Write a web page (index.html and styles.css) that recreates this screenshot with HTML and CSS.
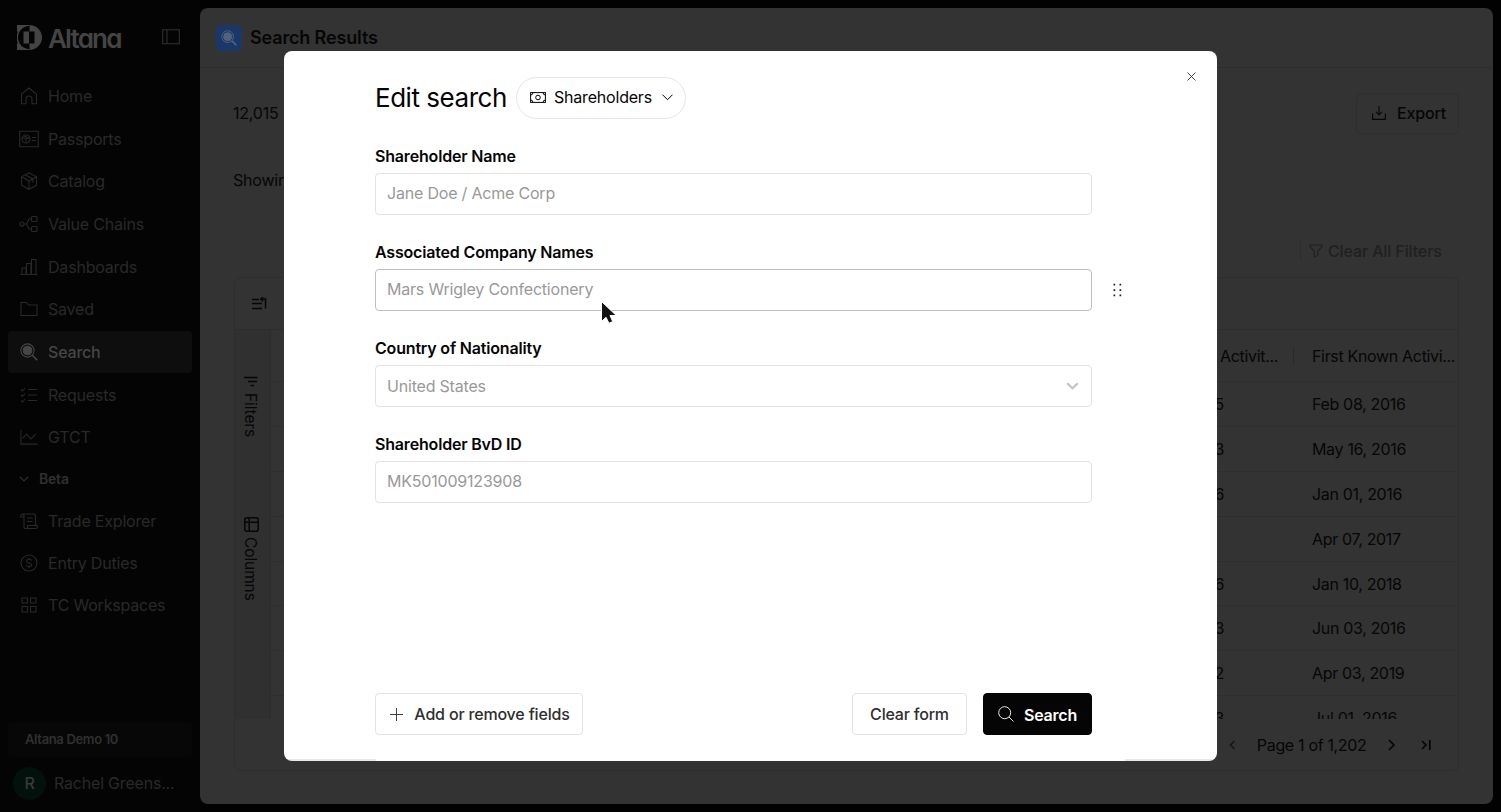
FILE: index.html
```html
<!DOCTYPE html>
<html lang="en">
<head>
<meta charset="utf-8">
<title>Altana - Search Results</title>
<link rel="stylesheet" href="styles.css">
</head>
<body>
<div class="app">
  <aside class="sidebar">
    <div class="brand">
      <svg class="brand-mark" width="25" height="25" viewBox="0 0 25 25"><path fill="currentColor" fill-rule="evenodd" d="M0 0H12V1A11.500 11.500 0 0 0 1 12.500 11.500 11.500 0 0 0 12 24V25H0V19L.8 18A13 13 0 0 1 .8 7L0 6ZM12.500 0A12.500 12.500 0 0 1 12.500 25V18.500H17.500V6.500H12.500ZM6.500 6.500h5.500v12H6.500Z"/></svg>
      <span class="brand-name">Altana</span>
      <svg class="panel-icon" width="18" height="16" viewBox="0 0 18 16"><path d="M.7.7H17.3V14.8H.7ZM5 .7V14.8"/></svg>
    </div>
    <nav class="nav">
      <a class="nav-item"><svg viewBox="0 0 18 18"><path d="M1.5 7.2 9 1l7.500 6.200V16.800H12V12a3 3 0 0 0-6 0v4.800H1.500Z"/></svg>Home</a>
      <a class="nav-item"><svg class="wide" viewBox="0 0 20 18"><path d="M.7 1.200H19.300V16.800H.7ZM13 7.500h4M13 10.500h4"/><circle cx="7" cy="9" r="4"/><path d="M3.500 7.500 7 9l3.500-1.500M7 9v4M5 6l4 2"/></svg>Passports</a>
      <a class="nav-item"><svg viewBox="0 0 18 18"><path d="M9 .8 16.500 4.800V13.200L9 17.300 1.500 13.200V4.800ZM1.500 4.800 9 9l7.500-4.200M9 9v8.300M5.200 2.800l7.600 4.200v3.500"/></svg>Catalog</a>
      <a class="nav-item"><svg class="wide" viewBox="0 0 20 18"><circle cx="3" cy="9" r="2"/><rect x="12.500" y="1.500" width="5.500" height="5" rx="1"/><rect x="12.500" y="11.500" width="5.500" height="5" rx="1"/><path d="M5 9h2.500L10 4h2.500M7.500 9 10 14h2.500"/></svg>Value Chains</a>
      <a class="nav-item"><svg viewBox="0 0 18 18"><path d="M.5 16.500h17M2 16.500V10H6v6.500M6.500 16.500V5.500h4.500v11M11.500 16.500V1.500H16v15"/></svg>Dashboards</a>
      <a class="nav-item"><svg viewBox="0 0 18 18"><path d="M1 15.500V2.500H6.500L8.500 5H17V15.500Z"/></svg>Saved</a>
      <a class="nav-item active"><svg viewBox="0 0 18 18"><circle cx="7.500" cy="7.500" r="6.600"/><circle cx="7.500" cy="7.500" r="4.300" fill="currentColor"/><path d="m12.300 12.300 5 5" stroke-width="1.600"/></svg>Search</a>
      <a class="nav-item"><svg viewBox="0 0 18 18"><path d="m1 3.500 1.500 1.500L5 2M1 9l1.500 1.500L5 7.500M1 14.500 2.500 16 5 13M8 3.500h9M8 9h9M8 14.500h9"/></svg>Requests</a>
      <a class="nav-item"><svg viewBox="0 0 19 18"><path d="M1 1.500V16.500H18.500M2.500 10.500 7 6l4.500 5 5-5"/></svg>GTCT</a>
    </nav>
    <div class="nav nav-beta">
      <div class="nav-group"><svg width="10" height="6" viewBox="0 0 10 6"><path d="m.7.7 4.300 4.300L9.300.7"/></svg>Beta</div>
      <a class="nav-item"><svg viewBox="0 0 18 18"><path d="M4 12.500V3.500A1.700 1.700 0 0 0 .7 3.500V5H4M2.500 2H14A1.500 1.500 0 0 1 15.500 3.500V13M4 12.500V15A1.500 1.500 0 0 0 5.500 16.500H16A1.500 1.500 0 0 0 17.300 15V13.500H7.500V15A1.500 1.500 0 0 1 5.500 16.500M7 6h5.500M7 9.500h5.500"/></svg>Trade Explorer</a>
      <a class="nav-item"><svg viewBox="0 0 18 18"><circle cx="9" cy="9" r="8"/><path d="M11.700 6.500C11.200 5.300 6.500 4.800 6.500 7.200S11.700 8.500 11.700 11 6.700 12.800 6.200 11.300M9 4v1.500M9 12.500V14"/></svg>Entry Duties</a>
      <a class="nav-item"><svg viewBox="0 0 18 18"><path d="M2 2H7.500V7H2ZM10.500 2H16V7H10.500ZM2 10.500H7.500V16H2ZM10.500 10.500H16V16H10.500Z"/></svg>TC Workspaces</a>
    </div>
    <div class="account">
      <div class="workspace">Altana Demo 10</div>
      <div class="user"><span class="avatar">R</span><span>Rachel Greens...</span></div>
    </div>
  </aside>

  <main class="main">
    <header class="page-head">
      <span class="page-icon"><svg width="16" height="16" viewBox="0 0 18 18"><circle cx="7.500" cy="7.500" r="6.600"/><circle cx="7.500" cy="7.500" r="4.500" fill="currentColor"/><path d="m12.300 12.300 5 5" stroke-width="1.800"/></svg></span>
      <h1>Search Results</h1>
    </header>
    <div class="summary">
      <span>12,015</span>
      <button class="export"><svg width="14" height="14" viewBox="0 0 14 14"><path d="M.6 7.500v5.900h12.800V7.500M7 0v8.500M4 5.800l3 3 3-3"/></svg>Export</button>
    </div>
    <div class="showing">Showing</div>
    <div class="filter-bar"><span class="clear-filters"><svg width="14" height="14" viewBox="0 0 14 14"><path d="M1 1H13V2.500L8.800 7V11.500L5.200 13V7L1 2.500Z"/></svg>Clear All Filters</span></div>
    <section class="grid">
      <div class="grid-tools"><svg width="16" height="14" viewBox="0 0 16 14"><path d="M0 2.500H7M0 6.500H10M0 11.500H10M8.500 2H13.500V11.500M11 0 8.800 2 11 4.200"/></svg></div>
      <div class="grid-body">
        <div class="rail">
          <div class="rail-tab rail-filters"><svg width="14" height="12" viewBox="0 0 14 12"><path d="M0 1.500H13.500M4 5.500H13M6.500 9.500H10"/></svg><span>Filters</span></div>
          <div class="rail-tab rail-columns"><svg width="15" height="15" viewBox="0 0 15 15"><rect x=".8" y=".8" width="13.400" height="13.400" rx="2"/><path d="M1 5.200H14M5.200 1V14"/></svg><span>Columns</span></div>
        </div>
        <div class="rows">
          <div class="row row-head"><span class="last">Activit...</span><span class="first">First Known Activi...</span></div>
          <div class="row"><span class="last">5</span><span class="first">Feb 08, 2016</span></div>
          <div class="row"><span class="last">3</span><span class="first">May 16, 2016</span></div>
          <div class="row"><span class="last">6</span><span class="first">Jan 01, 2016</span></div>
          <div class="row"><span class="last"></span><span class="first">Apr 07, 2017</span></div>
          <div class="row"><span class="last">6</span><span class="first">Jan 10, 2018</span></div>
          <div class="row"><span class="last">3</span><span class="first">Jun 03, 2016</span></div>
          <div class="row"><span class="last">2</span><span class="first">Apr 03, 2019</span></div>
          <div class="row"><span class="last">3</span><span class="first">Jul 01, 2016</span></div>
        </div>
      </div>
      <div class="pager">
        <svg class="dim" width="7" height="10" viewBox="0 0 7 10"><path d="M5.500 1 1.500 5l4 4"/></svg>
        <span>Page 1 of 1,202</span>
        <svg class="next" width="7" height="12" viewBox="0 0 7 12"><path d="m1 1 5 5-5 5"/></svg>
        <svg width="10" height="10" viewBox="0 0 10 10"><path d="m1 1 4 4-4 4M8.800 0V10"/></svg>
      </div>
    </section>
  </main>
</div>

<div class="modal" role="dialog">
  <svg class="close" width="9" height="9" viewBox="0 0 9 9"><path d="m.5.5 8 8m0-8-8 8"/></svg>
  <div class="modal-head">
    <h2>Edit search</h2>
    <button class="pill">
      <svg width="16" height="11" viewBox="0 0 16 11"><rect x=".6" y=".6" width="14.800" height="9.800"/><circle cx="8" cy="5.500" r="2.300"/><path d="M.6 3A2.500 2.500 0 0 0 3 .6M13 .6A2.500 2.500 0 0 0 15.400 3M15.400 8A2.500 2.500 0 0 0 13 10.400M3 10.400A2.500 2.500 0 0 0 .6 8"/></svg>
      <span>Shareholders</span>
      <svg width="11" height="7" viewBox="0 0 11 7"><path d="m.5.7 5 5 5-5"/></svg>
    </button>
  </div>
  <div class="fields">
    <div class="field"><label>Shareholder Name</label><div class="input">Jane Doe / Acme Corp</div></div>
    <div class="field"><label>Associated Company Names</label><div class="input hover">Mars Wrigley Confectionery
      <svg class="drag" width="9" height="14" viewBox="0 0 9 14"><path d="M.5 .8h1.700v1.700H.5ZM6.500 .8h1.700v1.700H6.500ZM.5 6.200h1.700v1.700H.5ZM6.500 6.200h1.700v1.700H6.500ZM.5 11.600h1.700v1.700H.5ZM6.500 11.600h1.700v1.700H6.500Z"/></svg></div></div>
    <div class="field"><label>Country of Nationality</label><div class="input select">United States<svg width="13" height="8" viewBox="0 0 13 8"><path d="m1.200 1.200 5.300 5.100 5.300-5.100"/></svg></div></div>
    <div class="field"><label>Shareholder BvD ID</label><div class="input">MK501009123908</div></div>
  </div>
  <div class="modal-foot">
    <button class="btn add"><svg width="13" height="13" viewBox="0 0 13 13"><path d="M6.500 0v13M0 6.500h13"/></svg>Add or remove fields</button>
    <button class="btn clear">Clear form</button>
    <button class="btn primary"><svg width="16" height="16" viewBox="0 0 16 16"><circle cx="6.700" cy="6.700" r="6"/><path d="m11 11 4.500 4.500"/></svg><span>Search</span></button>
  </div>
</div>
<svg class="cursor" width="18" height="25" viewBox="0 0 18 25"><path d="M1.500 1.500V21.500L6 17.300 9 23.300 12.700 21.500 10 15.500H16.300Z"/></svg>
</body>
</html>
```

FILE: styles.css
```css
* { box-sizing: border-box; }
body {
  margin: 0;
  width: 1501px;
  height: 812px;
  overflow: hidden;
  background: #020202;
  color: #060606;
  font: 400 16px/20px Inter, "Liberation Sans", sans-serif;
  letter-spacing: -.2px;
}
svg { fill: none; stroke: currentColor; stroke-width: 1.1; flex: none; display: block; }
button { font: inherit; letter-spacing: inherit; color: inherit; background: none; margin: 0; padding: 0; }
h1, h2 { margin: 0; }

.app { display: flex; height: 812px; }

/* Sidebar */
.sidebar { width: 200px; padding: 0 8px; background: #040404; color: #292929; display: flex; flex-direction: column; }
.brand { height: 74.500px; display: flex; align-items: center; padding: 0 12px 0 9px; color: #444; }
.brand-mark { stroke: none; }
.brand-name { margin: 3px 0 0 6px; font-size: 26px; line-height: 30px; font-weight: 600; letter-spacing: -1.800px; font-feature-settings: "cv11"; }
.panel-icon { margin-left: auto; color: #303030; }
.nav-item { height: 42.700px; display: flex; align-items: center; gap: 10px; padding-left: 12px; border-radius: 4px; }
.nav-item svg { width: 18px; height: 18px; }
.nav-item svg.wide { width: 20px; margin: 0 -1px; }
.nav-item.active { background: linear-gradient(#0e0e0e, #0e0e0e) 0 0 / 100% 42px no-repeat; color: #464646; font-weight: 500; }
.nav-group { height: 41.500px; display: flex; align-items: center; gap: 10px; padding-left: 11px; font-size: 14px; font-weight: 600; color: #303030; }
.nav-beta .nav-item { height: 41.750px; }
.account { margin-top: auto; padding-bottom: 12px; }
.workspace { height: 35px; padding: 0 17px; background: #070707; border-radius: 3px; font-size: 13px; line-height: 35px; font-weight: 600; letter-spacing: -.35px; color: #303030; }
.user { display: flex; align-items: center; gap: 8px; height: 34px; margin-top: 9px; padding-left: 5px; }
.avatar { width: 33px; height: 33px; border-radius: 50%; background: #03110c; color: #363c3a; font-weight: 500; line-height: 33px; text-align: center; }

/* Results page */
.main { width: 1293px; height: 796px; margin-top: 8px; background: #333; border-radius: 8px; display: flex; flex-direction: column; }
.page-head { height: 60px; padding: 0 16px; border-bottom: 1px solid #2e2e2e; display: flex; align-items: center; gap: 8px; }
.page-icon { width: 26px; height: 26px; border-radius: 5px; background: #193769; color: #54627a; display: grid; place-items: center; }
h1 { font-size: 18px; line-height: 24px; font-weight: 600; letter-spacing: -.15px; }
.summary { display: flex; align-items: center; justify-content: space-between; height: 41px; margin: 24.500px 34px 0 33px; }
.export { width: 103px; height: 41px; border: 1px solid #2e2e2e; border-radius: 4px; display: flex; align-items: center; justify-content: center; gap: 11px; padding-left: 3px; font-weight: 500; }
.showing { margin: 36.500px 33px 0; }
.filter-bar { height: 41px; margin: 40px 34px 0; display: flex; align-items: center; justify-content: flex-end; color: #202020; }
.clear-filters { display: flex; align-items: center; gap: 5px; width: 159px; height: 20px; padding-left: 8px; border-left: 1px solid #2d2d2d; font-weight: 500; letter-spacing: -.12px; }
.grid { height: 494px; margin: 6px 34px 0; border: 1px solid #2d2d2d; border-radius: 6px; }
.grid-tools { height: 52px; padding: 19px 17px; border-bottom: 1px solid #2d2d2d; }
.grid-tools svg { stroke-width: 1.500; }
.grid-body { height: 389px; display: flex; overflow: hidden; }
.rail { width: 36px; border-right: 1px solid #2d2d2d; background: #303030; }
.rail-tab { display: flex; flex-direction: column; align-items: center; gap: 5px; padding-right: 3px; }
.rail-tab span { writing-mode: vertical-rl; line-height: 18px; font-size: 15.500px; letter-spacing: -.1px; margin-right: 2px; }
.rail-tab svg { stroke-width: 1.500; }
.rail-filters { padding-top: 46px; }
.rail-columns { padding-top: 80px; }
.rows { flex: 1; }
.row { height: 44.900px; border-bottom: 1px solid #2e2e2e; display: flex; align-items: center; justify-content: flex-end; line-height: 20px; letter-spacing: -.33px; white-space: nowrap; }
.row-head { height: 52px; }
.last { width: 70px; margin-right: 88px; text-align: right; }
.row-head .last { width: 94px; height: 18px; line-height: 18px; padding-right: 15px; border-right: 1px solid #2a2a2a; margin-right: 18px; }
.first { width: 146px; }
.pager { height: 51px; display: flex; align-items: center; justify-content: flex-end; padding-right: 27.500px; }
.pager svg { stroke-width: 1.700; }
.pager span { margin: 0 21px; letter-spacing: -.33px; }
.pager .dim { color: #181818; }
.pager .next { margin-right: 26px; }

/* Edit search dialog */
.modal {
  position: absolute;
  left: 284px;
  top: 51px;
  width: 933px;
  height: 710px;
  padding: 25.500px 125px 26px 91px;
  border-radius: 8px;
  background: linear-gradient(#e8eaea, #e8eaea) 0 100% / 92px 2px no-repeat, linear-gradient(#e8eaea, #e8eaea) 100% 100% / 92px 2px no-repeat, #fff;
  color: #050505;
  display: flex;
  flex-direction: column;
}
.close { position: absolute; left: 903px; top: 21px; color: #333; stroke-width: .9; }
.modal-head { display: flex; align-items: center; gap: 9px; height: 42px; }
h2 { width: 132px; font-size: 26px; line-height: 32px; font-weight: 400; letter-spacing: -.47px; white-space: nowrap; }
.pill { width: 170px; height: 42px; border: 1px solid #e6e6e6; border-radius: 21px; display: flex; align-items: center; padding: 0 12px 0 13px; white-space: nowrap; }
.pill svg { stroke-width: 1; }
.pill span { margin: 0 auto 1px 8px; }
.fields { margin-top: 27.500px; }
.field { height: 96px; }
.field label { display: block; height: 27px; line-height: 20px; font-weight: 600; letter-spacing: -.18px; }
.input { position: relative; height: 42px; border: 1px solid #e3e3e3; border-radius: 4px; padding: 0 11px; line-height: 39px; color: #999; }
.input.hover { border-color: #bfbfbf; }
.input.select { display: flex; align-items: center; justify-content: space-between; padding-right: 12px; }
.select svg { stroke: #c4c4c4; stroke-width: 2.200; }
.drag { position: absolute; left: 737px; top: 13px; fill: #222; stroke: none; }
.modal-foot { display: flex; margin-top: auto; }
.btn { height: 42px; border: 1px solid #e3e3e3; border-radius: 4px; display: flex; align-items: center; justify-content: center; font-weight: 500; color: #2e2e2e; white-space: nowrap; }
.btn svg { stroke-width: .9; }
.add { width: 208px; gap: 11px; padding-left: 2px; letter-spacing: -.18px; }
.clear { width: 115px; margin-left: auto; }
.primary { width: 109px; margin-left: 16px; gap: 10px; background: #050505; border-color: #050505; color: #fff; font-weight: 600; }
.primary span { padding-top: 2px; }
.cursor { position: absolute; left: 600px; top: 300px; fill: #111; stroke: #fff; stroke-width: 1; }
```
